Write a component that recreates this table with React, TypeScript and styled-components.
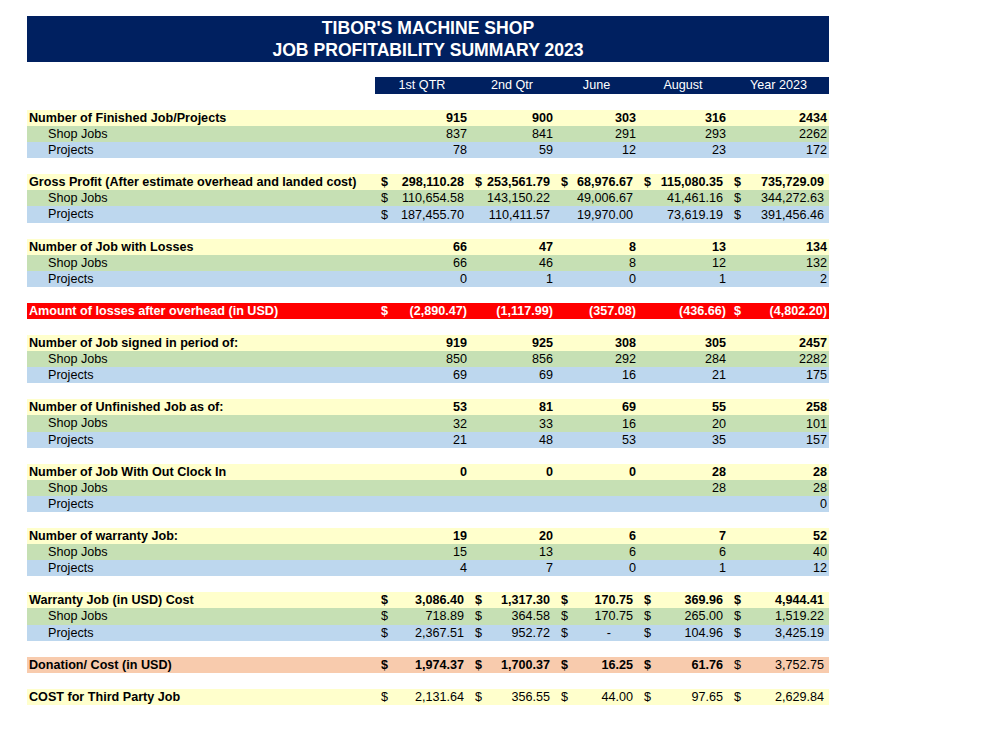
import React from "react";
import styled, { createGlobalStyle } from "styled-components";

const GlobalStyle = createGlobalStyle`
  html, body { margin: 0; padding: 0; background: #ffffff; }
  body {
    font-family: "Liberation Sans", Arial, sans-serif;
    color: #000000;
  }
`;

type Tone = "y" | "g" | "b" | "r" | "p";
type Kind = "n" | "a" | "p" | "dash";

interface Cell {
  v: string;
  d?: boolean;
  b?: boolean;
  db?: boolean;
  k?: Kind;
}

interface RowData {
  label: string;
  sub?: boolean;
  tone: Tone;
  cells: Cell[];
}

const toneColors: Record<Tone, string> = {
  y: "#ffffcc",
  g: "#c6e0b4",
  b: "#bdd7ee",
  r: "#ff0000",
  p: "#f8cbad",
};

const COLS = "348px 94px 86px 83px 90px 101px";

const Page = styled.div`
  padding: 16px 0 0 27px;
  width: 802px;
`;

const Banner = styled.div`
  background: #002060;
  height: 46px;
  display: flex;
  flex-direction: column;
  justify-content: center;
  align-items: center;
  color: #ffffff;
  font-weight: bold;
  font-size: 17.6px;
  line-height: 22px;
  margin-bottom: 15px;
`;

const HeaderRow = styled.div`
  display: grid;
  grid-template-columns: ${COLS};
  height: 16px;
  margin-bottom: 17px;
`;

const HeaderCell = styled.div`
  background: #002060;
  color: #ffffff;
  font-size: 12.6px;
  line-height: 17px;
  text-align: center;
`;

const Spacer = styled.div`
  height: 16.08px;
`;

const Row = styled.div<{ $tone: Tone }>`
  display: grid;
  grid-template-columns: ${COLS};
  height: 16.08px;
  background: ${(p) => toneColors[p.$tone]};
  color: ${(p) => (p.$tone === "r" ? "#ffffff" : "#000000")};
  font-size: 12.6px;
  line-height: 16px;
  white-space: nowrap;
`;

const Label = styled.div<{ $sub?: boolean }>`
  padding-left: ${(p) => (p.$sub ? "21px" : "2px")};
  font-weight: ${(p) => (p.$sub ? "normal" : "bold")};
  overflow: hidden;
`;

const padFor = (k: Kind) => {
  switch (k) {
    case "a":
      return "5px";
    case "dash":
      return "27px";
    default:
      return "2px";
  }
};

const ValueCell = styled.div<{ $k: Kind }>`
  display: flex;
  justify-content: space-between;
  align-items: center;
  padding: 0 ${(p) => padFor(p.$k)} 0 6px;
`;

const Dollar = styled.span<{ $b?: boolean }>`
  font-weight: ${(p) => (p.$b ? "bold" : "normal")};
`;

const Num = styled.span<{ $b?: boolean }>`
  margin-left: auto;
  font-weight: ${(p) => (p.$b ? "bold" : "normal")};
`;

const n = (vals: (string | number)[], b?: boolean): Cell[] =>
  vals.map((v) => ({ v: String(v), b, k: "n" as Kind }));

const a = (vals: string[], dollars: boolean[], b?: boolean): Cell[] =>
  vals.map((v, i) => ({
    v,
    d: dollars[i],
    b,
    db: b,
    k: (v === "-" ? "dash" : "a") as Kind,
  }));

const ALL = [true, true, true, true, true];

type Section = RowData[];

const sections: Section[] = [
  [
    { label: "Number of Finished Job/Projects", tone: "y", cells: n([915, 900, 303, 316, 2434], true) },
    { label: "Shop Jobs", sub: true, tone: "g", cells: n([837, 841, 291, 293, 2262]) },
    { label: "Projects", sub: true, tone: "b", cells: n([78, 59, 12, 23, 172]) },
  ],
  [
    {
      label: "Gross Profit (After estimate overhead and landed cost)",
      tone: "y",
      cells: a(["298,110.28", "253,561.79", "68,976.67", "115,080.35", "735,729.09"], ALL, true),
    },
    {
      label: "Shop Jobs",
      sub: true,
      tone: "g",
      cells: a(["110,654.58", "143,150.22", "49,006.67", "41,461.16", "344,272.63"], [true, false, false, false, true]),
    },
    {
      label: "Projects",
      sub: true,
      tone: "b",
      cells: a(["187,455.70", "110,411.57", "19,970.00", "73,619.19", "391,456.46"], [true, false, false, false, true]),
    },
  ],
  [
    { label: "Number of Job with Losses", tone: "y", cells: n([66, 47, 8, 13, 134], true) },
    { label: "Shop Jobs", sub: true, tone: "g", cells: n([66, 46, 8, 12, 132]) },
    { label: "Projects", sub: true, tone: "b", cells: n([0, 1, 0, 1, 2]) },
  ],
  [
    {
      label: "Amount of losses after overhead (in USD)",
      tone: "r",
      cells: ["(2,890.47)", "(1,117.99)", "(357.08)", "(436.66)", "(4,802.20)"].map((v, i) => ({
        v,
        d: i === 0 || i === 4,
        b: true,
        db: true,
        k: "p" as Kind,
      })),
    },
  ],
  [
    { label: "Number of Job signed in period of:", tone: "y", cells: n([919, 925, 308, 305, 2457], true) },
    { label: "Shop Jobs", sub: true, tone: "g", cells: n([850, 856, 292, 284, 2282]) },
    { label: "Projects", sub: true, tone: "b", cells: n([69, 69, 16, 21, 175]) },
  ],
  [
    { label: "Number of Unfinished Job as of:", tone: "y", cells: n([53, 81, 69, 55, 258], true) },
    { label: "Shop Jobs", sub: true, tone: "g", cells: n([32, 33, 16, 20, 101]) },
    { label: "Projects", sub: true, tone: "b", cells: n([21, 48, 53, 35, 157]) },
  ],
  [
    { label: "Number of Job With Out Clock In", tone: "y", cells: n([0, 0, 0, 28, 28], true) },
    { label: "Shop Jobs", sub: true, tone: "g", cells: n(["", "", "", 28, 28]) },
    { label: "Projects", sub: true, tone: "b", cells: n(["", "", "", "", 0]) },
  ],
  [
    { label: "Number of warranty Job:", tone: "y", cells: n([19, 20, 6, 7, 52], true) },
    { label: "Shop Jobs", sub: true, tone: "g", cells: n([15, 13, 6, 6, 40]) },
    { label: "Projects", sub: true, tone: "b", cells: n([4, 7, 0, 1, 12]) },
  ],
  [
    {
      label: "Warranty Job (in USD) Cost",
      tone: "y",
      cells: a(["3,086.40", "1,317.30", "170.75", "369.96", "4,944.41"], ALL, true),
    },
    {
      label: "Shop Jobs",
      sub: true,
      tone: "g",
      cells: a(["718.89", "364.58", "170.75", "265.00", "1,519.22"], ALL),
    },
    {
      label: "Projects",
      sub: true,
      tone: "b",
      cells: a(["2,367.51", "952.72", "-", "104.96", "3,425.19"], ALL),
    },
  ],
  [
    {
      label: "Donation/ Cost (in USD)",
      tone: "p",
      cells: [
        ...a(["1,974.37", "1,700.37", "16.25", "61.76"], ALL, true),
        { v: "3,752.75", d: true, k: "a" as Kind },
      ],
    },
  ],
  [
    {
      label: "COST for Third Party Job",
      tone: "y",
      cells: a(["2,131.64", "356.55", "44.00", "97.65", "2,629.84"], ALL),
    },
  ],
];

const headers = ["1st QTR", "2nd Qtr", "June", "August", "Year 2023"];

const DataRow: React.FC<{ row: RowData }> = ({ row }) => (
  <Row $tone={row.tone}>
    <Label $sub={row.sub}>{row.label}</Label>
    {row.cells.map((c, i) => (
      <ValueCell key={i} $k={c.k ?? "n"}>
        {c.d && <Dollar $b={c.db}>$</Dollar>}
        <Num $b={c.b}>{c.v}</Num>
      </ValueCell>
    ))}
  </Row>
);

export default function App() {
  return (
    <>
      <GlobalStyle />
      <Page>
        <Banner>
          <div>TIBOR'S MACHINE SHOP</div>
          <div>JOB PROFITABILITY SUMMARY 2023</div>
        </Banner>
        <HeaderRow>
          <div />
          {headers.map((h) => (
            <HeaderCell key={h}>{h}</HeaderCell>
          ))}
        </HeaderRow>
        {sections.map((sec, si) => (
          <React.Fragment key={si}>
            {si > 0 && <Spacer />}
            {sec.map((r, ri) => (
              <DataRow key={ri} row={r} />
            ))}
          </React.Fragment>
        ))}
      </Page>
    </>
  );
}
